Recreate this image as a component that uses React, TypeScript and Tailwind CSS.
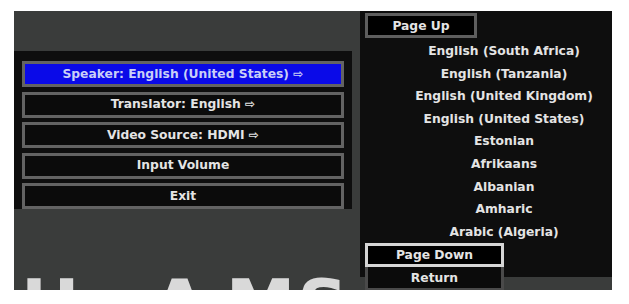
const MENU = [
  { label: 'Speaker: English (United States) ⇨', active: true },
  { label: 'Translator: English ⇨' },
  { label: 'Video Source: HDMI ⇨' },
  { label: 'Input Volume' },
  { label: 'Exit' },
];

const LANGS = [
  'English (South Africa)',
  'English (Tanzania)',
  'English (United Kingdom)',
  'English (United States)',
  'Estonian',
  'Afrikaans',
  'Albanian',
  'Amharic',
  'Arabic (Algeria)',
];

const font = { fontFamily: '"DejaVu Sans", "Noto Sans", sans-serif' };

export default function App() {
  return (
    <div
      className="h-[304px] w-[629px] overflow-hidden bg-white pl-[14px] pt-[11px]"
      style={font}
    >
      {/* screen */}
      <div className="flex h-[279px] w-[598px] gap-[8px] overflow-hidden bg-[#3a3c3b] text-[12.3px] font-bold">
        {/* left: main menu */}
        <div className="flex w-[338px] shrink-0 flex-col pt-[40px]">
          <div className="flex h-[182px] flex-col gap-[4.5px] bg-[#0e0e0e] px-[8px] pt-[10px]">
            {MENU.map((m) => (
              <div
                key={m.label}
                className={
                  'flex h-[26px] items-center justify-center border-[3px] border-[#636363] ' +
                  (m.active ? 'bg-[#0a0ae8] text-[#c9cff7]' : 'bg-[#0b0b0b] text-[#e4e4e4]')
                }
              >
                {m.label}
              </div>
            ))}
          </div>
          {/* logo, mostly below the frame */}
          <div className="mt-[61px] flex whitespace-nowrap pl-[7px] text-[70px] font-bold leading-none text-[#d9d9d9]">
            <span>H</span>
            <span className="ml-[73px]">A</span>
            <span className="ml-[19px]">M</span>
            <span className="ml-[2px]">S</span>
          </div>
        </div>

        {/* right: language picker */}
        <div className="flex h-[266px] w-[252px] shrink-0 flex-col bg-[#0e0e0e] pl-[5px] pt-[2px] text-[#e4e4e4]">
          <div className="flex h-[25px] w-[112px] items-center justify-center border-[3px] border-[#5e5e5e] bg-black pt-[1px]">
            Page Up
          </div>
          <div className="flex flex-col pl-[31px] pt-[2px]">
            {LANGS.map((l) => (
              <div key={l} className="flex h-[22.6px] items-center justify-center whitespace-nowrap">
                {l}
              </div>
            ))}
          </div>
          <div className="flex h-[24px] w-[139px] shrink-0 items-center justify-center border-[3px] border-[#d6d6d6] bg-black">
            Page Down
          </div>
          <div className="flex h-[24px] w-[139px] shrink-0 items-center justify-center border-x-[3px] border-b-[3px] border-[#4a4a4a] bg-[#0b0b0b]">
            Return
          </div>
        </div>
      </div>
    </div>
  );
}
